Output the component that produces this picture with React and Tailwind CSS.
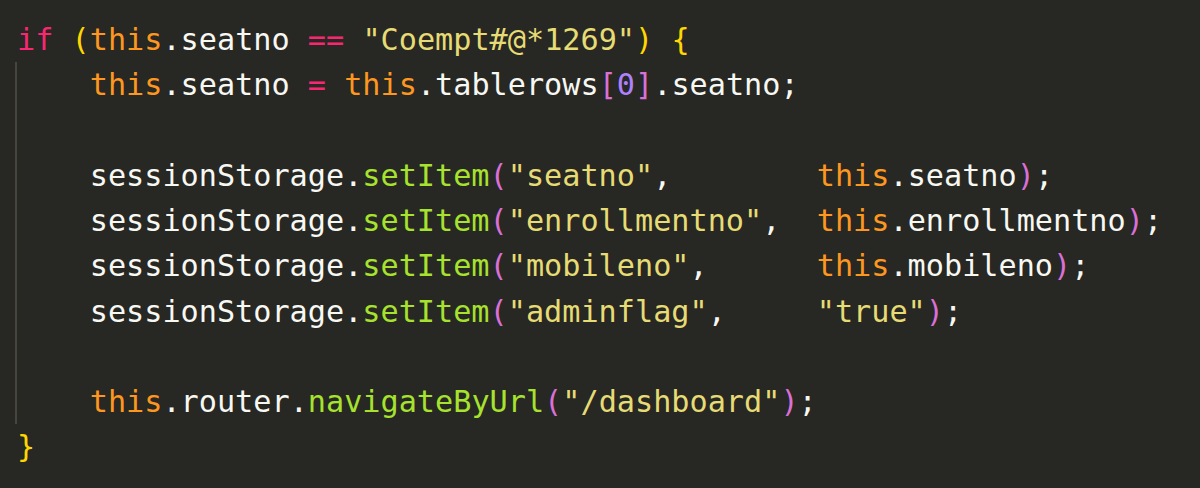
import React from "react";

const K = ({ c }) => <span className="text-[#f92672]">{c}</span>;
const T = () => <span className="text-[#fd971f]">this</span>;
const S = ({ c }) => <span className="text-[#e6db74]">{c}</span>;
const F = ({ c }) => <span className="text-[#a6e22e]">{c}</span>;
const G = ({ c }) => <span className="text-[#ffd700]">{c}</span>;
const P = ({ c }) => <span className="text-[#da70d6]">{c}</span>;
const N = ({ c }) => <span className="text-[#ae81ff]">{c}</span>;

const Line = ({ children }) => <div className="h-[45.25px] whitespace-pre">{children}</div>;

export default function App() {
  return (
    <div
      className="w-[1200px] h-[488px] bg-[#272723] text-[#f8f8f2] text-[30.2px] leading-[45.25px] pt-[17px] pl-[17px] overflow-hidden"
      style={{ fontFamily: '"DejaVu Sans Mono", monospace' }}
    >
      <Line>
        <K c="if" /> <G c="(" /><T />.seatno <K c="==" /> <S c={'"Coempt#@*1269"'} /><G c=")" /> <G c="{" />
      </Line>
      <div className="-ml-[2px] border-l-2 border-[#46463f]">
        <Line>
          {"    "}<T />.seatno <K c="=" /> <T />.tablerows<P c="[" /><N c="0" /><P c="]" />.seatno;
        </Line>
        <Line>{" "}</Line>
        <Line>
          {"    "}sessionStorage.<F c="setItem" /><P c="(" /><S c={'"seatno"'} />,{"        "}<T />.seatno<P c=")" />;
        </Line>
        <Line>
          {"    "}sessionStorage.<F c="setItem" /><P c="(" /><S c={'"enrollmentno"'} />,{"  "}<T />.enrollmentno<P c=")" />;
        </Line>
        <Line>
          {"    "}sessionStorage.<F c="setItem" /><P c="(" /><S c={'"mobileno"'} />,{"      "}<T />.mobileno<P c=")" />;
        </Line>
        <Line>
          {"    "}sessionStorage.<F c="setItem" /><P c="(" /><S c={'"adminflag"'} />,{"     "}<S c={'"true"'} /><P c=")" />;
        </Line>
        <Line>{" "}</Line>
        <Line>
          {"    "}<T />.router.<F c="navigateByUrl" /><P c="(" /><S c={'"/dashboard"'} /><P c=")" />;
        </Line>
      </div>
      <Line>
        <G c="}" />
      </Line>
    </div>
  );
}
